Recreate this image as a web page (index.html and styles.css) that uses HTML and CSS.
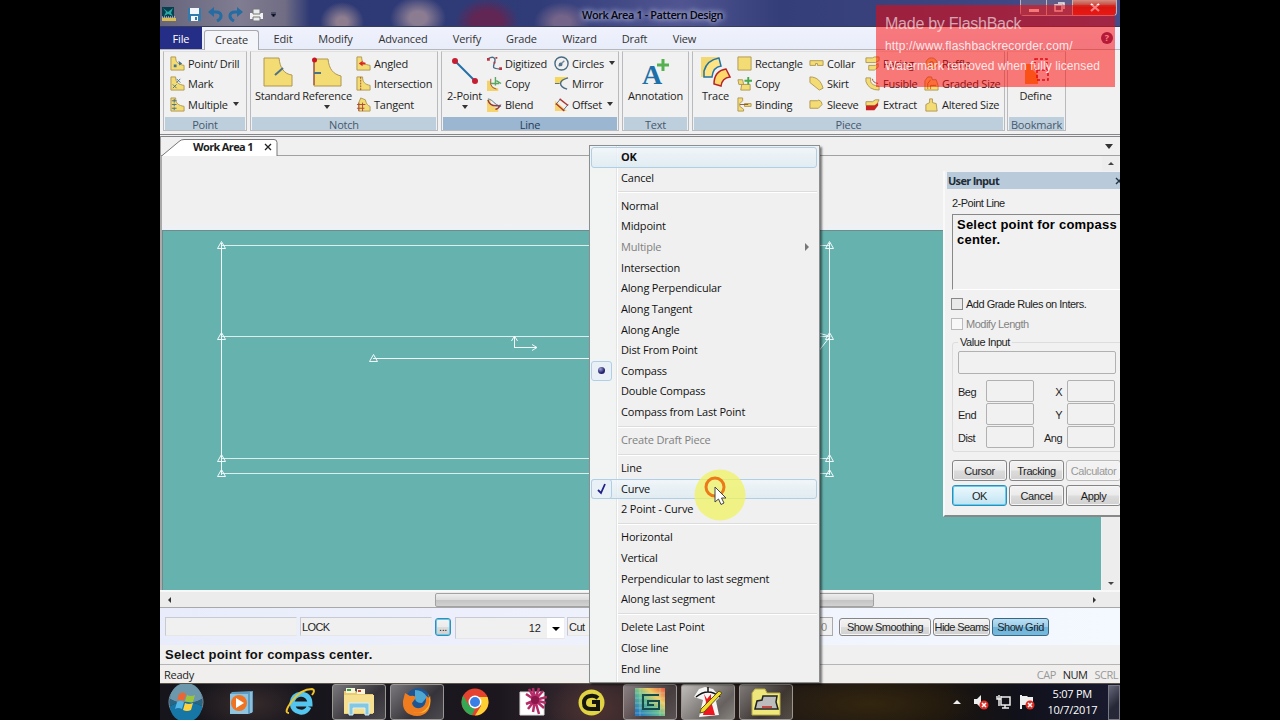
FILE: index.html
```html
<!DOCTYPE html>
<html lang="en">

<head>
    <meta charset="UTF-8">
    <meta name="viewport" content="width=device-width, initial-scale=1.0">
    <title>Work Area 1 - Pattern Design</title>
    <link rel="stylesheet" href="styles.css">
</head>

<body>
    <div class="screen">
        <div class="titlebar">
            <div class="quick">
                <svg width="14" height="17" viewBox="0 0 14 17"><path d="M0 1h12v10H0z" fill="#083e4d"/><path d="M1 2l5 4 5-4-2 5 2 3-5-2-4 2 2-4z" fill="#27a9a5"/><path d="M0 12h14v3H0z" fill="#d9bd52"/><path d="M0 11h14" stroke="#eee" stroke-dasharray="1 1"/></svg>
                <svg class="save" width="15" height="15" viewBox="0 0 15 15"><path d="M1 1h13v13H1z" fill="#317cac"/><path d="M3 1h9v6H3zM4 9h7v5H4z" fill="#f3f6fa"/><path d="M8 10h2v3H8z" fill="#317cac"/></svg>
                <svg width="15" height="15" viewBox="0 0 15 15"><path d="M3 5h5c6 0 7 6 1 9" fill="none" stroke="#246ca2" stroke-width="3"/><path d="M0 5l6-5v10z" fill="#246ca2"/></svg>
                <svg width="15" height="15" viewBox="0 0 15 15"><path d="M12 5H7C1 5 0 11 6 14" fill="none" stroke="#246ca2" stroke-width="3"/><path d="M15 5L9 0v10z" fill="#246ca2"/></svg>
                <svg class="print" width="15" height="14" viewBox="0 0 15 14"><path d="M1 5h13v6H1z" fill="#f2f2f2"/><path d="M4 1h7v5H4zM4 9h7v4H4z" fill="#e8edf0" stroke="#777"/></svg>
                <svg width="5" height="5" viewBox="0 0 5 5"><path d="M0 0h5M0 2h5L2.500 5z" stroke="#25304e"/></svg>
            </div>
            <span class="title">Work Area 1 - Pattern Design</span>
            <div class="winbtns">
                <span class="wb"><svg width="12" height="10"><path d="M1 6h10v3H1z" fill="#eee"/></svg></span>
                <span class="wb"><svg width="12" height="11"><path d="M4 1h6v6M1 3h7v6H1z" fill="none" stroke="#eee" stroke-width="1.500"/></svg></span>
                <span class="wb close"><svg width="12" height="10"><path d="M2 1l8 7M10 1L2 8" stroke="#fff" stroke-width="2.200"/></svg></span>
            </div>
        </div>

        <div class="tabs">
            <span class="tab file">File</span>
            <span class="tab active">Create</span>
            <span class="tab t-edit">Edit</span>
            <span class="tab t-modify">Modify</span>
            <span class="tab t-adv">Advanced</span>
            <span class="tab t-verify">Verify</span>
            <span class="tab t-grade">Grade</span>
            <span class="tab t-wizard">Wizard</span>
            <span class="tab t-draft">Draft</span>
            <span class="tab t-view">View</span>
            <span class="help">?</span>
        </div>

        <div class="ribbon">
            <div class="group g-point">
                <div class="tools">
                    <div class="col">
                        <div class="tool"><svg viewBox="0 0 16 16"><path class="y" d="M1 1h5c0 6 3 8 9 9v5H1z"/><path class="d" d="M4 9h3v3H4zM9 5l4 3-3 2z"/></svg>Point/ Drill</div>
                        <div class="tool"><svg viewBox="0 0 16 16"><path class="y" d="M1 1h5c0 6 3 8 9 9v5H1z"/><path class="s" d="M3 9l4 4M7 9l-4 4M7 3l4 4M11 3L7 7"/></svg>Mark</div>
                        <div class="tool"><svg viewBox="0 0 16 16"><path class="y" d="M1 1h5c0 6 3 8 9 9v5H1z"/><path class="s" d="M2 4h5M2 8h5M2 12h5M4.500 2v4M4.500 7v3M4.500 11v3"/></svg>Multiple<i class="dd"></i></div>
                    </div>
                </div>
                <div class="cap">Point</div>
            </div>

            <div class="group g-notch">
                <div class="tools">
                    <div class="big"><svg viewBox="0 0 30 30"><path class="y" d="M1 1h15c1 10 5 16 13 17v11H1z"/><path class="s" d="M12 18l8-7" stroke-width="2"/></svg>Standard</div>
                    <div class="big"><svg viewBox="0 0 30 30"><path class="y" d="M2 2h14c1 10 5 15 13 17v10H2z"/><path d="M2 3v25" stroke="#912f2d"/><circle cx="2.500" cy="3" r="2.500" fill="#c91424"/><path class="s" d="M2 16h7" stroke-width="2"/></svg>Reference<i class="dd"></i></div>
                    <div class="col">
                        <div class="tool"><svg viewBox="0 0 16 16"><path class="y" d="M1 1h5c0 6 3 8 9 9v5H1z"/><path d="M3 8l4-3v2h3v2H7v2z" fill="#db2525"/></svg>Angled</div>
                        <div class="tool"><svg viewBox="0 0 16 16"><path class="y" d="M1 1h6c0 6 3 8 8 9v5H1z"/><path d="M5 1v14" stroke="#9c4e29" stroke-dasharray="2 1"/></svg>Intersection</div>
                        <div class="tool"><svg viewBox="0 0 16 16"><path class="y" d="M5 1l5 2c1 4 2 6 5 7v5H3V6z"/><path d="M1 8h9M1 12h8M3 6v9M7 6v9" stroke="#ae4938"/></svg>Tangent</div>
                    </div>
                </div>
                <div class="cap">Notch</div>
            </div>

            <div class="group g-line current">
                <div class="tools">
                    <div class="big"><svg viewBox="0 0 30 30"><path d="M5 4l20 20" stroke="#246fa6" stroke-width="2"/><circle cx="5" cy="4" r="3" fill="#c71d32"/><circle cx="25" cy="24" r="3" fill="#c71d32"/></svg>2-Point<i class="dd"></i></div>
                    <div class="col">
                        <div class="tool"><svg viewBox="0 0 16 16"><path class="n" d="M1 3c5-3 9-2 7 4s-2 6 6 7"/><path d="M0 2h3v3H0zM7 6h2v2H7zM13 12h3v3h-3zM9 1h2v2H9z" fill="#bd3444"/></svg>Digitized</div>
                        <div class="tool"><svg viewBox="0 0 16 16"><path d="M0 5h4c0 6 2 7 8 8v3H0z" fill="#f3d369"/><path d="M4 3v6q1 4 6 5" fill="none" stroke="#a04a3c"/><path d="M9 1v9M4 8h9M10 5l5 3" stroke="#59a85d" stroke-width="1.500"/></svg>Copy</div>
                        <div class="tool"><svg viewBox="0 0 16 16"><path d="M0 3v13h12v-4Q2 10 4 3z" fill="#f6d56f"/><path d="M1 3q2 8 13 6-2 4-5 4" fill="none" stroke="#953a3b" stroke-width="1.500"/><path class="s" d="M1 2c6 1 6 6 14 8"/></svg>Blend</div>
                    </div>
                    <div class="col">
                        <div class="tool"><svg viewBox="0 0 16 16"><circle cx="8" cy="8" r="7" class="n"/><path d="M5 11l6-6" stroke="#75889a" stroke-width="1.500"/><circle cx="7" cy="9" r="2" fill="#54738d"/></svg>Circles<i class="dd"></i></div>
                        <div class="tool"><svg viewBox="0 0 16 16"><path d="M1 1h14L6 8H1z" fill="#f4d75c"/><path class="n" d="M15 2Q7 4 7 8t7 6"/><path d="M1 8h5" stroke="#50688a"/></svg>Mirror</div>
                        <div class="tool"><svg viewBox="0 0 16 16"><path d="M1 4v11h13z" fill="#f6d56f"/><path class="s" d="M2 8l5-6M10 14l5-6"/><path d="M6 2l9 7M2 7l9 8" stroke="#b0332f" stroke-width="1.500"/></svg>Offset<i class="dd"></i></div>
                    </div>
                </div>
                <div class="cap">Line</div>
            </div>

            <div class="group g-text">
                <div class="tools">
                    <div class="big"><svg viewBox="0 0 30 30"><path d="M22 2v12M16 8h12" stroke="#58b151" stroke-width="3"/><text x="1" y="27" class="letter">A</text></svg>Annotation</div>
                </div>
                <div class="cap">Text</div>
            </div>

            <div class="group g-piece">
                <div class="tools">
                    <div class="big"><svg viewBox="0 0 30 30"><path d="M0 0h18L4 20H0z" fill="#f3d76f"/><path d="M3 14Q6 3 18 1l2 8Q12 10 11 20H3z" fill="#ffe486" stroke="#2373a4" stroke-width="1.500"/><path d="M13 27q0-13 12-15l4 8q-8 1-9 9z" fill="#ffd76b" stroke="#b62326" stroke-width="1.500"/></svg>Trace</div>
                    <div class="col">
                        <div class="tool"><svg viewBox="0 0 16 16"><path class="y" d="M1 1h14v14H1z"/></svg>Rectangle</div>
                        <div class="tool"><svg viewBox="0 0 16 16"><path class="y" d="M1 4h5l1 5H2zM5 9h9v6H4z"/><path d="M12 1v8M8 5h8" stroke="#47a54b" stroke-width="2"/></svg>Copy</div>
                        <div class="tool"><svg viewBox="0 0 16 16"><path class="y" d="M1 1h5v3L3 7v3l4 3v2H1zM8 7h7v3H8z"/><path d="M3 8h9" stroke="#875c35"/></svg>Binding</div>
                    </div>
                    <div class="col">
                        <div class="tool"><svg viewBox="0 0 16 16"><path class="y" d="M1 5h14v5H9V8H7v2H1z"/></svg>Collar</div>
                        <div class="tool"><svg viewBox="0 0 16 16"><path class="y" d="M1 1c8 0 12 5 14 12l-4 2L1 7z"/></svg>Skirt</div>
                        <div class="tool"><svg viewBox="0 0 16 16"><path class="y" d="M1 4h8q1-2 4 1l1 3-4 4H1z"/></svg>Sleeve</div>
                    </div>
                    <div class="col">
                        <div class="tool"><svg viewBox="0 0 16 16"><path class="y" d="M1 2h7l2-1h5v4l-4 2H1zM4 10h7l3-2v4l-4 3H4z"/></svg>Facing</div>
                        <div class="tool"><svg viewBox="0 0 16 16"><path class="y" d="M1 2h5v4q1 4 9 5v4Q4 15 1 6z"/><path d="M8 3q0 4 6 5" fill="none" stroke="#a24d39"/></svg>Fusible</div>
                        <div class="tool"><svg viewBox="0 0 16 16"><path class="y" d="M1 5h7l3-2h4l-3 6H1z"/><path d="M1 9h9l4-3v3l-4 5H1z" fill="#c82323"/></svg>Extract</div>
                    </div>
                    <div class="col">
                        <div class="tool"><svg viewBox="0 0 16 16"><circle cx="8" cy="8" r="6" class="y"/><circle cx="8" cy="8" r="2" fill="#eee" stroke="#9c6d3c"/></svg>Ruffle</div>
                        <div class="tool"><svg viewBox="0 0 16 16"><path class="y" d="M1 5l3-4h4l1 3h4l2 6v5H1z"/><path d="M4 14V8l3-4M7 14v-4h6" fill="none" stroke="#c7762e"/></svg>Graded Size</div>
                        <div class="tool"><svg viewBox="0 0 16 16"><path class="y" d="M2 8l4-2V2h3v4l4 1 1 8H2z"/></svg>Altered Size</div>
                    </div>
                </div>
                <div class="cap">Piece</div>
            </div>

            <div class="group g-book">
                <div class="tools">
                    <div class="big"><svg viewBox="0 0 30 30"><path d="M4 7h8v6l5 5v9H4z" fill="#f3a331"/><path d="M14 2h12v11H14zM16 13v10h11V13" fill="none" stroke="#c51429" stroke-width="1.500" stroke-dasharray="3 2"/></svg>Define</div>
                </div>
                <div class="cap">Bookmark</div>
            </div>
        </div>

        <div class="doctabs">
            <svg class="doctab-shape" width="118" height="20" viewBox="0 0 118 20"><path d="M0 19.500L18 4.500Q20 2.500 23 2.500h90q3 0 3 3v14" fill="#fff" stroke="#777"/></svg>
            <span class="docname">Work Area 1</span>
            <svg class="docx" width="8" height="8"><path d="M1 1l6 6M7 1L1 7" stroke="#222" stroke-width="1.300"/></svg>
            <i class="dd doclist"></i>
        </div>

        <div class="work">
            <div class="view">
                <div class="blank"></div>
                <svg class="canvas" width="938" height="359" viewBox="163 231 938 359">
                    <g class="seam">
                        <path d="M221 245.500h609M221 336.500h609M221 458.500h609M221 473.500h609"/>
                    </g>
                    <g class="edge">
                        <path d="M221.500 243v232M829.500 243v232M373 358.500h440l17-22M815 332l14 4"/>
                        <path d="M514.500 347.500v-11M511.500 341l3-5 3 5M514 347.500h23M532 344.500l5 3-5 3"/>
                        <path id="tri" d="M217.500 248.500h8l-4-7z"/>
                        <use href="#tri" y="91"/><use href="#tri" y="213"/><use href="#tri" y="228"/>
                        <use href="#tri" x="608"/><use href="#tri" x="608" y="91"/><use href="#tri" x="608" y="213"/><use href="#tri" x="608" y="228"/>
                        <use href="#tri" x="152" y="113"/>
                    </g>
                </svg>
            </div>
            <div class="vscroll"><i class="up"></i><i class="down"></i></div>
        </div>
        <div class="hscroll"><i class="left"></i><div class="thumb"></div><i class="right"></i></div>

        <div class="bar">
            <span class="field f1"></span>
            <span class="field f2">LOCK</span>
            <span class="btn dots">...</span>
            <span class="field f3">12<i class="drop"></i></span>
            <span class="field f4">Cut</span>
            <span class="field f5">0</span>
            <span class="btn b1">Show Smoothing</span>
            <span class="btn b2">Hide Seams</span>
            <span class="btn b3">Show Grid</span>
        </div>
        <div class="prompt">Select point for compass center.</div>
        <div class="status"><span class="ready">Ready</span><span class="off">CAP</span><span>NUM</span><span class="off">SCRL</span></div>

        <div class="taskbar">
            <div class="slot start">
                <svg width="36" height="36" viewBox="0 0 36 36"><circle cx="18" cy="18" r="17" fill="#14394f" stroke="#7b98a8"/><path d="M2 15a16 16 0 0132 0q-16 9-32 0" fill="#6d97ab"/><path d="M2 22a16 16 0 0032 0q-16-8-32 0" fill="#1676a6"/><path d="M2 15q16 8 32 0v7q-16-8-32 0z" fill="#2a6584"/><path d="M11 10q4-3 7 0l-2 7q-4-2-7 0z" fill="#ee6534"/><path d="M19 11q4 2 8 0l-2 7q-4 1-8-1z" fill="#9bc53d"/><path d="M9 18q3-2 7 0l-2 7q-4-2-7 0z" fill="#55b7e5"/><path d="M17 19q4 2 8 0l-2 7q-4 2-8 0z" fill="#ffd23d"/></svg>
            </div>
            <div class="slot"><svg width="26" height="26" viewBox="0 0 26 26"><path d="M3 3l21-1v21l-4 2H1V5z" fill="#5d9dc3"/><path d="M1 5h18v20H1z" fill="#91c4de"/><path d="M22 3v21" stroke="#bde1f1"/><circle cx="10" cy="14" r="8" fill="#ee7423"/><path d="M7 9l8 5-8 5z" fill="#fff"/></svg></div>
            <div class="slot"><svg width="30" height="30" viewBox="0 0 30 30"><path d="M24 20q-3 6-9 5-7-1-8-9 1-8 9-9 9 1 9 10H8" fill="none" stroke="#54c5ee" stroke-width="5"/><path d="M4 26Q-2 26 7 14T27 2q4 1 0 6" fill="none" stroke="#f0c329" stroke-width="2"/></svg></div>
            <div class="slot run"><svg width="32" height="30" viewBox="0 0 32 30"><path d="M1 4h12l2 3h15v20H1z" fill="#e8cc72"/><path d="M3 1h9v5H3zM14 2h8v5h-8z" fill="#f9f5db"/><path d="M4 2h4v2H4z" fill="#34a547"/><path d="M15 3h3v2h-3z" fill="#c4442f"/><path d="M1 8h30v18H1z" fill="#f5df91"/><path d="M6 28V16h20v12h-4v-7H10v7z" fill="#83c8e3" stroke="#d9f0f8"/></svg></div>
            <div class="slot run"><svg width="30" height="30" viewBox="0 0 30 30"><circle cx="16" cy="13" r="12" fill="#215591"/><path d="M13 3q8 0 12 7l-5 6q-7 0-7-5z" fill="#4ea7d3"/><path d="M3 6l5 3q7-1 5 3l-3 4q1 6 8 5 7-2 6-12 5 4 4-2 3 21-13 22Q0 28 1 14z" fill="#ef7d20"/><path d="M26 7q4 9-2 15t-13 3q14 4 17-8 1-6-2-10" fill="#f9bc30"/></svg></div>
            <div class="slot"><svg width="28" height="28" viewBox="0 0 28 28"><circle cx="14" cy="14" r="13.500" fill="#e5432f"/><path d="M2.300 7.500L8 17.500l6 3.500-3 6.200A13.500 13.500 0 012.300 7.500" fill="#35a853"/><path d="M26.500 9H14l6 9-6 9.500A13.500 13.500 0 0026.500 9" fill="#fdcf33"/><circle cx="14" cy="14" r="6.500" fill="#fff"/><circle cx="14" cy="14" r="5" fill="#397fe5"/></svg></div>
            <div class="slot"><svg width="28" height="30" viewBox="0 0 28 30"><path d="M1 5h24v23H1z" fill="#fff" stroke="#ddd"/><g transform="translate(2 0)"><path d="M14 13L8 2M14 13l-2-12M14 13l4-12M14 13l8-9M14 13l12-3M14 13l11 3M14 13l9 8M14 13l4 14M14 13l-2 12M14 13l-7 9M14 13L5 17M14 13L5 7" stroke="#b62c69" stroke-width="2.500"/><circle cx="14" cy="13" r="4" fill="#8c174c"/></g></svg></div>
            <div class="slot"><svg width="27" height="27" viewBox="0 0 27 27"><circle cx="13.500" cy="13.500" r="13" fill="#e0d442"/><path d="M20 9q-3-3-8-2-6 1-6 7t7 6h7v-7h-6" fill="none" stroke="#15160c" stroke-width="4"/></svg></div>
            <div class="slot run"><svg width="32" height="30" viewBox="0 0 32 30"><defs><linearGradient id="rb" x1="0" y1="1" x2="1" y2="0"><stop offset=".1" stop-color="#267ac1"/><stop offset=".45" stop-color="#60bb91"/><stop offset=".7" stop-color="#efcb62"/><stop offset="1" stop-color="#e95a42"/></linearGradient></defs><path d="M1 1h30v28H1z" fill="url(#rb)"/><path d="M1 6h30M1 11h30M1 16h30M1 21h30M1 26h30M6 1v28M26 1v28" stroke="#c8e6d4" stroke-opacity=".35"/><path d="M25 8H9v14h16v-8H14v4h6" fill="none" stroke="#164b4b" stroke-width="2"/></svg></div>
            <div class="slot run hot"><svg width="34" height="32" viewBox="0 0 34 32"><path d="M8 3l6-2 8 2 7 8-4 4 3 14-20 2 4-17-9-3z" fill="#f5f5f5"/><path d="M13 8l3 5 4-5v7l4 14H12l3-13z" fill="#ee1720"/><path d="M5 11Q17 1 29 11M17 1v5" fill="none" stroke="#111" stroke-width="1.500"/><path d="M28 5l3 2L13 26l-4 1 1-4z" fill="#f1dd2c" stroke="#625218"/></svg></div>
            <div class="slot run"><svg width="32" height="28" viewBox="0 0 32 28"><path d="M2 5l3-4h10l2 4h13v22H2z" fill="#eee77b" stroke="#b8aa44"/><path d="M5 21l2-8 5-1 1-4h14l-1 6 2 7z" fill="#bcbcbc" stroke="#222" stroke-width="1.500"/><path d="M12 19h10" stroke="#c52420" stroke-width="1.500"/></svg></div>
            <div class="tray">
                <i class="up"></i>
                <svg width="16" height="16" viewBox="0 0 16 16"><path d="M1 5h3l4-4v13l-4-4H1z" fill="#eee"/><circle cx="11" cy="11" r="4.500" fill="#d92d25"/><path d="M9 9l4 4M13 9l-4 4" stroke="#fff" stroke-width="1.500"/></svg>
                <svg width="16" height="16" viewBox="0 0 16 16"><path d="M5 3h9v8H5zM3 1v5M1 2v3h4V2M3 5v7M6 14h7M9 11v3" fill="none" stroke="#eee" stroke-width="1.500"/></svg>
                <svg width="16" height="16" viewBox="0 0 16 16"><path d="M2 1v14" stroke="#eee" stroke-width="2"/><path d="M3 2h5l1 1h5v8H3z" fill="#eee"/><circle cx="11" cy="11" r="4.500" fill="#d92d25"/><path d="M9 9l4 4M13 9l-4 4" stroke="#fff" stroke-width="1.500"/></svg>
            </div>
            <div class="clock">5:07 PM<br>10/7/2017</div>
            <div class="desk"></div>
        </div>

        <div class="dialog">
            <div class="dtitle">User Input<svg width="8" height="8"><path d="M1 1l6 6M7 1L1 7" stroke="#234" stroke-width="1.400"/></svg></div>
            <div class="dname">2-Point Line</div>
            <div class="dmsg">Select point for compass center.</div>
            <div class="check"><i></i>Add Grade Rules on Inters.</div>
            <div class="check disabled"><i></i>Modify Length</div>
            <div class="values">
                <span class="legend">Value Input</span>
                <div class="inp wide"></div>
                <div class="vgrid">
                    <span>Beg</span><i class="inp"></i><span class="r">X</span><i class="inp"></i>
                    <span>End</span><i class="inp"></i><span class="r">Y</span><i class="inp"></i>
                    <span>Dist</span><i class="inp"></i><span class="r">Ang</span><i class="inp"></i>
                </div>
            </div>
            <div class="dbtns">
                <span class="btn">Cursor</span><span class="btn">Tracking</span><span class="btn gray">Calculator</span>
                <span class="btn ok">OK</span><span class="btn">Cancel</span><span class="btn">Apply</span>
            </div>
        </div>

        <div class="watermark">
            <div class="w1">Made by FlashBack</div>
            <div class="w2">http://www.flashbackrecorder.com/</div>
            <div class="w3">Watermark removed when fully licensed</div>
        </div>

        <ul class="menu">
            <li class="hl bold">OK</li>
            <li>Cancel</li>
            <li class="sep"></li>
            <li>Normal</li>
            <li>Midpoint</li>
            <li class="dis">Multiple<i class="sub"></i></li>
            <li>Intersection</li>
            <li>Along Perpendicular</li>
            <li>Along Tangent</li>
            <li>Along Angle</li>
            <li>Dist From Point</li>
            <li><span class="mark"><b></b></span>Compass</li>
            <li>Double Compass</li>
            <li>Compass from Last Point</li>
            <li class="sep"></li>
            <li class="dis">Create Draft Piece</li>
            <li class="sep"></li>
            <li>Line</li>
            <li class="hl"><span class="mark"><svg width="10" height="12"><path d="M1 7l3 3 4-9" fill="none" stroke="#20208a" stroke-width="1.800"/></svg></span>Curve</li>
            <li>2 Point - Curve</li>
            <li class="sep"></li>
            <li>Horizontal</li>
            <li>Vertical</li>
            <li>Perpendicular to last segment</li>
            <li>Along last segment</li>
            <li class="sep"></li>
            <li>Delete Last Point</li>
            <li>Close line</li>
            <li>End line</li>
        </ul>

        <svg class="pointer" width="52" height="52" viewBox="0 0 52 52"><circle cx="26" cy="26" r="25.500" fill="#f1f35c" fill-opacity=".72"/><circle cx="21" cy="18" r="9" fill="none" stroke="#ec7a18" stroke-width="3"/><path d="M21 18v15l3.500-3 2.500 5.500 3-1.500-2.500-5H32z" fill="#fff" stroke="#444"/></svg>
    </div>
</body>

</html>
```
FILE: styles.css
```css
* {
    margin: 0;
    padding: 0;
    box-sizing: border-box;
}

body {
    background: #000;
    font-family: "Open Sans", "Noto Sans", sans-serif;
    font-size: 11px;
    color: #1e1e1e;
    overflow: hidden;
}

svg {
    flex: none;
}

.screen {
    position: relative;
    width: 960px;
    height: 720px;
    margin: 0 auto;
    display: flex;
    flex-direction: column;
    overflow: hidden;
    background: #f0f0f0;
    white-space: nowrap;
}

/* title bar */
.titlebar {
    height: 27px;
    flex: none;
    display: flex;
    align-items: center;
    background:
        radial-gradient(ellipse 22px 20px at 182px 22px, #8d7d8f 25%, transparent),
        radial-gradient(ellipse 28px 22px at 258px 18px, #8b7c92 30%, transparent),
        radial-gradient(ellipse 32px 24px at 327px 22px, #612653 45%, transparent),
        radial-gradient(ellipse 28px 20px at 402px 22px, #746489 30%, transparent),
        linear-gradient(90deg, #66657c, #807d92 80px, #706d84 125px, #2d3974 150px, #303c78 380px, #505591 520px, #343e78 620px, #444b89 960px);
    border-bottom: 1px solid #363d59;
}

.quick {
    display: flex;
    align-items: center;
    width: 422px;
    padding: 3px 0 0 2px;
}

.quick .save {
    margin: 0 6px 0 11px;
}

.quick .print {
    margin: 0 7px 0 6px;
}

.quick svg:nth-child(4) {
    margin-left: 5px;
}

.title {
    width: 368px;
    padding-top: 3px;
    color: #05050e;
    letter-spacing: -0.42px;
    font-weight: 600;
    text-shadow: 0 0 5px #bdc1dd, 0 0 7px #9a9fc9, 0 0 10px #8a90c0;
}

.winbtns {
    display: flex;
    align-self: flex-start;
    margin-left: 70px;
    height: 16px;
    border: 1px solid #bcb2bd;
    border-top: 0;
    border-radius: 0 0 4px 4px;
}

.wb {
    width: 26px;
    display: flex;
    align-items: center;
    justify-content: center;
    border-right: 1px solid #bbb;
    background: #5e5c88;
}

.wb.close {
    width: 43px;
    border: 0;
    border-radius: 0 0 4px 0;
    background: linear-gradient(#d98b80, #b32e25 50%, #d5302a);
}

/* ribbon tabs */
.tabs {
    height: 23px;
    flex: none;
    display: flex;
    background: linear-gradient(#f0f2fc, #e8edfa);
    border-bottom: 1px solid #b5b7bd;
    line-height: 24px;
    color: #333;
}

.tab {
    text-align: center;
    letter-spacing: -0.15px;
}

.file {
    width: 42px;
    background: #252e86;
    color: #fff;
}

.tab.active {
    width: 55px;
    margin: 3px 0 -1px 2px;
    line-height: 17px;
    background: #f3f5f9;
    border: 1px solid #a7a7ac;
    border-bottom: 0;
    border-radius: 3px 3px 0 0;
}

.t-edit { width: 48px; }
.t-modify { width: 57px; }
.t-adv { width: 78px; }
.t-verify { width: 50px; }
.t-grade { width: 59px; }
.t-wizard { width: 57px; }
.t-draft { width: 53px; }
.t-view { width: 47px; }

.help {
    width: 12px;
    height: 12px;
    margin: 5px 7px 0 auto;
    border-radius: 50%;
    background: #6b3472;
    color: #fff;
    font-size: 9px;
    font-weight: bold;
    line-height: 12px;
    text-align: center;
}

/* ribbon */
.ribbon {
    height: 85px;
    flex: none;
    display: flex;
    padding: 1px 0 3px 3px;
    gap: 3px;
    border-bottom: 1px solid #85868a;
    background: #f1f1f1;
}

.group {
    display: flex;
    flex-direction: column;
    border: 1px solid #b9babd;
    border-top-color: #e0e0e0;
    padding: 0 1px;
}

.g-point { width: 84px; }
.g-notch { width: 188px; }
.g-line { width: 178px; }
.g-text { width: 67px; }
.g-piece { width: 313px; }

.g-book {
    width: 59px;
    margin-left: -1px;
}

.tools {
    display: grid;
    height: 66px;
    padding-top: 1px;
}

.g-point .tools { padding-left: 5px; }

.g-notch .tools {
    grid-template-columns: 49px 54px 1fr;
    padding-left: 1px;
}

.g-notch .big + .big {
    padding-right: 4px;
}

.g-line .tools { grid-template-columns: 44px 67px 1fr; }
.g-line .big { padding-right: 1px; }
.g-piece .tools { grid-template-columns: 43px 72px 56px 59px 1fr; }

.col {
    display: grid;
    grid-template-rows: repeat(3, 20.500px);
    align-content: start;
}

.tool {
    display: flex;
    align-items: center;
    letter-spacing: -0.25px;
}

.tool svg {
    width: 15px;
    height: 15px;
    margin-right: 3px;
}

.big {
    display: flex;
    flex-direction: column;
    align-items: center;
    padding-top: 4px;
    line-height: 17px;
    letter-spacing: -0.22px;
}

.big svg {
    width: 30px;
    height: 30px;
    overflow: visible;
}

.g-book .big {
    padding-right: 2px;
}

.y {
    fill: #f4dc75;
    stroke: #b09751;
}

.d { fill: #44738f; }

.s {
    fill: none;
    stroke: #4b7286;
}

.n {
    fill: none;
    stroke: #496c84;
    stroke-width: 1.5;
}

.letter {
    font: bold 28px "Liberation Serif", serif;
    fill: #1d71a8;
}

.cap {
    height: 13px;
    line-height: 15px;
    text-align: center;
    background: #bdcfdc;
    color: #47586c;
    letter-spacing: -0.2px;
}

.current .cap {
    background: #9bb6d0;
    color: #263b5a;
}

.dd {
    width: 0;
    height: 0;
    border: 3px solid transparent;
    border-top: 4px solid #333;
    border-bottom: 0;
}

.tool .dd { margin-left: 5px; }
.big .dd { margin-top: 1px; }

/* document tabs */
.doctabs {
    height: 20px;
    flex: none;
    display: flex;
    align-items: center;
    border-top: 1px solid #85868a;
    border-bottom: 1px solid #a1a1a1;
    margin-top: 1px;
    border-left: 1px solid #999;
}

.doctab-shape {
    margin: 0 -118px -1px 0;
}

.docname {
    width: 98px;
    padding-left: 32px;
    font-weight: bold;
    letter-spacing: -0.65px;
    z-index: 1;
}

.docx {
    margin: 2px 0 0 5px;
    z-index: 1;
}

.doclist {
    margin: 0 7px 0 auto;
    border-width: 4px;
    border-top-width: 5px;
    border-bottom: 0;
}

/* drawing area */
.work {
    height: 434px;
    flex: none;
    display: flex;
    border-left: 2px solid #aaa;
}

.view {
    width: 939px;
}

.blank {
    height: 75px;
    background: linear-gradient(#f0f0f0 90%, #edf1f6);
    border-bottom: 1px solid #718b8a;
}

.canvas {
    display: block;
    height: 359px;
    width: 939px;
    background: #66b2af;
    border-left: 1px solid #718b8a;
}

.seam {
    stroke: #dceeed;
}

.edge {
    fill: none;
    stroke: #f2fbfa;
}

.vscroll {
    width: 17px;
    margin-left: 1px;
    background: #ededed;
    display: flex;
    flex-direction: column;
    justify-content: space-between;
    align-items: center;
    padding: 6px 0 5px;
}

.up, .down, .left, .right {
    border: 3px solid transparent;
}

.up {
    border-top: 0;
    border-bottom-color: #444;
}

.down {
    border-bottom: 0;
    border-top-color: #444;
}

.left {
    border-left: 0;
    border-right-color: #333;
}

.right {
    border-right: 0;
    border-left-color: #333;
}

.hscroll {
    height: 18px;
    flex: none;
    display: flex;
    align-items: center;
    justify-content: space-between;
    padding: 0 24px 0 8px;
    background: #ececec;
    border-top: 2px solid #f8f8f8;
    border-bottom: 1px solid #a6a8ac;
}

.thumb {
    width: 439px;
    height: 14px;
    margin-left: 45px;
    border: 1px solid #a2a2a2;
    border-radius: 2px;
    background: linear-gradient(#eee, #dcdcdc 48%, #c4c4c4 52%, #d2d2d2);
}

/* toolbar under the drawing area */
.bar {
    height: 37px;
    flex: none;
    display: flex;
    padding: 9px 0 0 5px;
    background: linear-gradient(90deg, #e9ecfa, #f4f8ff);
    font-family: "Liberation Sans", sans-serif;
    line-height: 18px;
}

.field {
    height: 19px;
    flex: none;
    background: #f0f0f0;
    border: 1px solid #c7cad2;
    border-right-color: #eee;
    border-bottom-color: #e6e6e6;
    padding-left: 2px;
}

.f1 { width: 132px; }

.f2 {
    width: 132px;
    margin-left: 3px;
    padding-left: 1px;
    letter-spacing: -0.6px;
}

.f3 {
    width: 110px;
    height: 22px;
    margin-left: 4px;
    display: flex;
    justify-content: flex-end;
    line-height: 21px;
}

.drop {
    width: 17px;
    margin-left: 6px;
    background: #fff;
}

.drop::after {
    content: "";
    display: block;
    margin: 9px 0 0 5px;
    width: 0;
    border: 4px solid transparent;
    border-top-color: #000;
    border-bottom: 0;
}

.f4 {
    width: 60px;
    margin-left: 2px;
    padding-left: 1px;
    letter-spacing: -0.5px;
}

.f5 {
    width: 60px;
    margin-left: 146px;
    text-align: right;
    padding-right: 5px;
    color: #888;
    border-color: #aaa;
}

.btn {
    display: block;
    text-align: center;
    border: 1px solid #858585;
    border-radius: 3px;
    background: linear-gradient(#f3f3f3, #ebebeb 48%, #dcdcdc 52%, #d0d0d0);
    box-shadow: inset 0 0 0 1px #f6f6f6;
    letter-spacing: -0.4px;
    overflow: hidden;
}

.bar .btn {
    height: 18px;
    flex: none;
    margin-top: 1px;
    line-height: 16px;
}

.bar .dots {
    width: 16px;
    margin-left: 3px;
    border-color: #328eb5;
    box-shadow: inset 0 0 0 1px #68c7e8;
}

.bar .b1 {
    width: 92px;
    margin-left: 6px;
    letter-spacing: -0.5px;
}

.bar .b2 {
    width: 57px;
    margin-left: 2px;
    letter-spacing: -0.6px;
}

.bar .b3 {
    width: 57px;
    margin-left: 2px;
    letter-spacing: -0.55px;
    border-color: #3a6680;
    box-shadow: none;
    background: linear-gradient(#b9dff3, #9bcdea 48%, #70b5dc 52%, #76b9de);
}

.prompt {
    height: 20px;
    flex: none;
    padding-left: 5px;
    border-bottom: 1px solid #b5b5b5;
    font: bold 13px/20px "Liberation Sans", sans-serif;
    letter-spacing: 0.23px;
    color: #111;
}

.status {
    height: 18px;
    flex: none;
    display: flex;
    gap: 7px;
    padding: 0 2px 0 4px;
    line-height: 20px;
    letter-spacing: -0.5px;
    background: #f0efed;
}

.ready {
    margin-right: auto;
    letter-spacing: -0.25px;
}

.off {
    color: #999;
}

/* taskbar */
.taskbar {
    height: 37px;
    flex: none;
    display: flex;
    align-items: center;
    gap: 4.200px;
    background:
        radial-gradient(ellipse 50px 30px at 435px 25px, #4d3230, transparent),
        radial-gradient(ellipse 60px 30px at 90px 20px, #372b2c, transparent),
        radial-gradient(ellipse 110px 30px at 710px 20px, #33260f, transparent),
        linear-gradient(90deg, #15151b, #1c171f 340px, #382a30 430px, #211916 600px, #1c150e 780px, #10111a 860px, #1a1a30);
    border-top: 1px solid #5b554c;
}

.slot {
    width: 54px;
    height: 36px;
    flex: none;
    display: flex;
    align-items: center;
    justify-content: center;
}

.start {
    width: 51px;
}

.run {
    border: 1px solid #9a9692;
    border-radius: 3px;
    background: linear-gradient(135deg, rgba(255, 255, 255, .42), rgba(255, 255, 255, .12) 60%, rgba(255, 255, 255, .22));
}

.hot {
    background: linear-gradient(135deg, #c0bebb, #66615e 70%, #888480);
}

.tray {
    display: flex;
    align-items: center;
    gap: 7px;
    margin-left: auto;
}

.tray .up {
    border-width: 4px;
    border-top: 0;
    border-bottom-color: #eee;
    margin-right: 5px;
}

.clock {
    width: 65px;
    padding-left: 2px;
    text-align: center;
    color: #fff;
    line-height: 16px;
    letter-spacing: -0.25px;
}

.desk {
    width: 12px;
    height: 35px;
    border: 1px solid #777884;
    background: linear-gradient(135deg, #666879, #262737 60%);
}

/* user input dialog */
.dialog {
    position: absolute;
    left: 783px;
    top: 171px;
    width: 220px;
    height: 346px;
    background: #f1f1f1;
    border-left: 2px solid #f9f9f9;
    border-bottom: 2px solid #888;
    font-family: "Liberation Sans", sans-serif;
    letter-spacing: -0.5px;
    padding: 1px 0 0 2px;
}

.dtitle {
    height: 17px;
    padding-left: 1px;
    background: #b9cbda;
    font: bold 11px/18px "Open Sans", sans-serif;
    letter-spacing: -0.7px;
    color: #222b36;
}

.dtitle svg {
    margin-left: 116px;
}

.dname {
    padding: 8px 0 0 5px;
    line-height: 12px;
    letter-spacing: -0.5px;
}

.dmsg {
    width: 200px;
    height: 76px;
    margin: 5px 0 0 5px;
    padding: 2px 22px 0 4px;
    border: 1px solid #888;
    border-bottom-color: #fff;
    white-space: normal;
    font: bold 13px/15px "Liberation Sans", sans-serif;
    letter-spacing: 0.22px;
    color: #000;
}

.check {
    display: flex;
    align-items: center;
    height: 20px;
    padding: 0 0 0 4px;
    margin-top: 4px;
}

.check + .check {
    margin-top: 0;
}

.check i {
    width: 12px;
    height: 12px;
    margin-right: 3px;
    border: 1px solid #888;
    background: #e9e9e9;
}

.disabled {
    color: #838383;
}

.disabled i {
    border-color: #bbb;
    background: #f8f8f8;
}

.values {
    width: 190px;
    height: 110px;
    margin: 8px 0 0 5px;
    border: 1px solid #ddd;
    border-radius: 3px;
    padding: 0 0 0 5px;
}

.legend {
    display: block;
    width: 54px;
    height: 12px;
    padding-left: 2px;
    background: #f1f1f1;
    line-height: 12px;
    margin: -7px 0 8px;
    letter-spacing: -0.45px;
}

.inp {
    display: block;
    height: 22px;
    border: 1px solid #b1b1b1;
    border-radius: 2px;
}

.wide {
    width: 158px;
    height: 23px;
    margin-top: -5px;
}

.vgrid {
    display: grid;
    grid-template-columns: 28px 48px 29px 48px;
    row-gap: 1px;
    margin-top: 6px;
    line-height: 22px;
}

.vgrid span {
    height: 22px;
    padding-top: 1px;
}

.vgrid .r {
    width: 29px;
    text-align: right;
    padding-right: 1px;
}

.vgrid .inp:nth-child(4n) {
    margin-left: 4px;
    width: 48px;
}

.dbtns {
    display: grid;
    grid-template-columns: 55px 55px 55px;
    gap: 4px 2px;
    margin: 8px 0 0 5px;
}

.dbtns .btn {
    height: 21px;
    line-height: 20px;
}

.dbtns .gray {
    color: #999;
    border-color: #bbb;
    background: #f2f2f2;
}

.dbtns .ok {
    border-color: #2e8eb8;
    box-shadow: inset 0 0 0 1px #63cdf0;
    background: linear-gradient(#edf7fb, #d7eff9 50%, #bee3f1);
}

/* recorder watermark */
.watermark {
    position: absolute;
    left: 716px;
    top: 5px;
    width: 239px;
    height: 82px;
    padding-left: 9px;
    background: rgba(255, 0, 0, .5);
    color: rgba(255, 255, 255, .85);
    font-family: "Liberation Sans", sans-serif;
    font-size: 12px;
}

.w1 {
    color: rgba(255, 255, 255, .6);
    font-size: 16px;
    line-height: 20px;
    padding-top: 9px;
    letter-spacing: -0.25px;
}

.w2 {
    line-height: 16px;
    margin-top: 4px;
    letter-spacing: 0.15px;
}

.w3 {
    line-height: 16px;
    margin-top: 4px;
    letter-spacing: 0.07px;
}

/* context menu */
.menu {
    position: absolute;
    left: 429px;
    top: 145px;
    width: 231px;
    height: 538px;
    padding: 1px 2px 0 1px;
    list-style: none;
    background: linear-gradient(90deg, #f2f3f3 26px, #e2e3e3 26px, #e2e3e3 27px, #fff 27px, #fff 28px, #f0f0f0 28px);
    border: 1px solid #8b8f8f;
    box-shadow: 2px 2px 2px rgba(0, 0, 0, .5);
    color: #111;
    letter-spacing: -0.18px;
}

.menu li {
    position: relative;
    height: 20.650px;
    line-height: 20.500px;
    padding-left: 29px;
    border: 1px solid transparent;
    border-width: 0 1px;
}

.menu .hl {
    border: 1px solid #afcfe6;
    border-radius: 3px;
    background: linear-gradient(rgba(240, 247, 252, .7), rgba(221, 235, 242, .8));
    line-height: 18.500px;
}

.menu .bold {
    font-weight: bold;
}

.menu .dis {
    color: #808080;
}

.menu .sep {
    height: 7.400px;
    margin-left: 27px;
    background: linear-gradient(transparent 3px, #dcdcdc 3px, #dcdcdc 4px, #fff 4px, #fff 5px, transparent 5px);
}

.sub {
    position: absolute;
    right: 7px;
    top: 6px;
    border: 4px solid transparent;
    border-left-color: #777;
    border-right: 0;
}

.mark {
    position: absolute;
    left: -1px;
    top: 0;
    width: 21px;
    height: 20px;
    display: flex;
    align-items: center;
    justify-content: center;
    border: 1px solid #afcfe6;
    border-radius: 3px;
    background: #e9f1f7;
}

.hl .mark {
    top: -1px;
}

.mark b {
    width: 7px;
    height: 7px;
    border-radius: 50%;
    background: radial-gradient(circle at 35% 30%, #a0a0d5, #22226d 60%);
}

.pointer {
    position: absolute;
    left: 534px;
    top: 469px;
}
```
